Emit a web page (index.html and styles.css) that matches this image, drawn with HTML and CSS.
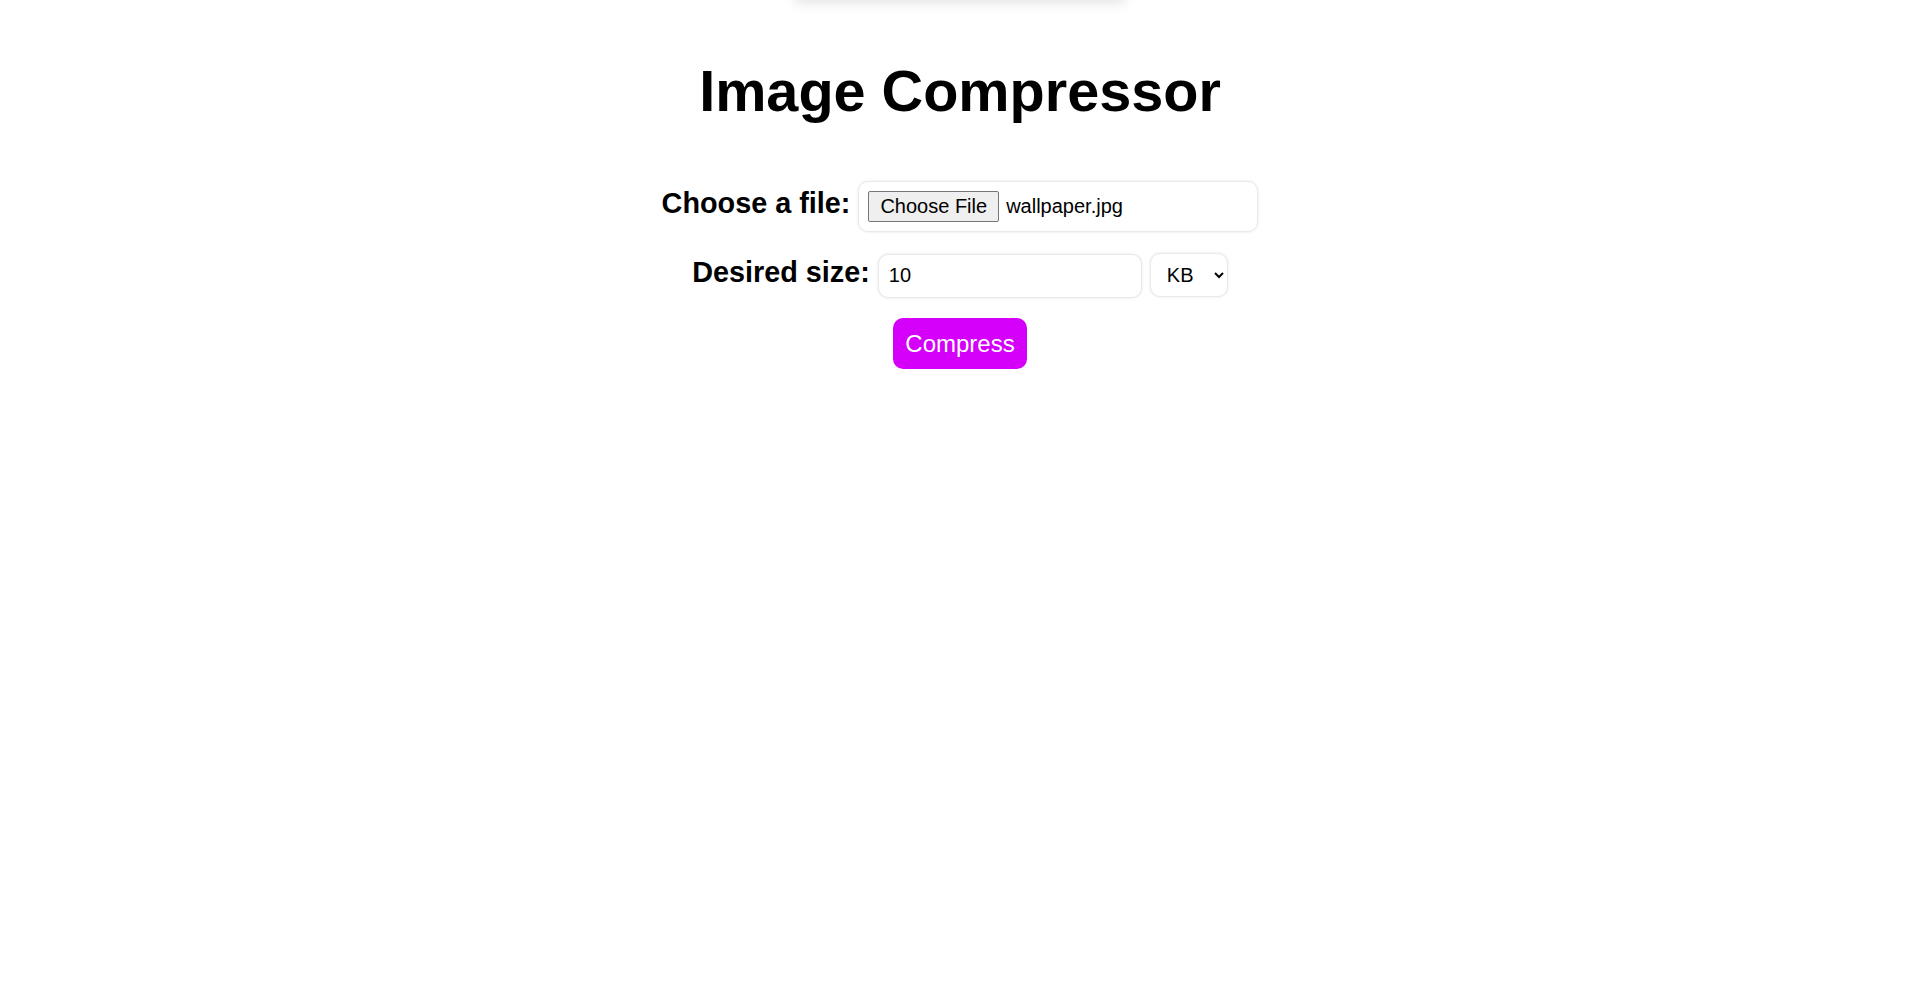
FILE: index.html
```html
<!DOCTYPE html>
<html lang="en">
<head>
<meta charset="utf-8">
<title>Image Compressor</title>
<link rel="stylesheet" href="styles.css">
</head>
<body>
<div class="topbar"></div>
<main class="page">
  <h1 class="title">Image Compressor</h1>
  <form class="form">
    <div class="row">
      <label class="label">Choose a file:</label>
      <div class="file-box">
        <button type="button" class="file-btn">Choose File</button>
        <span class="file-name">wallpaper.jpg</span>
      </div>
    </div>
    <div class="row">
      <label class="label" for="size">Desired size:</label>
      <input class="size-input" id="size" type="text" value="10">
      <select class="unit-select">
        <option>KB</option>
        <option>MB</option>
      </select>
    </div>
    <div class="actions">
      <button type="button" class="compress-btn">Compress</button>
    </div>
  </form>
</main>
</body>
</html>
```

FILE: styles.css
```css
html, body {
  margin: 0;
  padding: 0;
  background: #ffffff;
}

body {
  font-family: "Liberation Sans", Arial, sans-serif;
  color: #000;
  position: relative;
  min-height: 988px;
  overflow: hidden;
}

.topbar {
  position: absolute;
  top: -40px;
  left: 50%;
  transform: translateX(-50%);
  width: 330px;
  height: 40px;
  background: #fff;
  box-shadow: 0 2px 12px rgba(0, 0, 0, 0.13);
}

.page {
  display: flex;
  flex-direction: column;
  align-items: center;
}

.title {
  font-size: 57.6px;
  line-height: 67px;
  font-weight: bold;
  margin: 58px 0 56px;
}

.form {
  display: flex;
  flex-direction: column;
  align-items: center;
}

.row {
  display: flex;
  align-items: baseline;
  justify-content: center;
  gap: 8px;
  margin-bottom: 21px;
}

.row + .row {
  margin-bottom: 20px;
}

.label {
  font-size: 28.8px;
  font-weight: bold;
}

.file-box {
  box-sizing: border-box;
  width: 400px;
  height: 51px;
  padding: 9px;
  border: 1px solid #e9e9e9;
  border-radius: 10px;
  box-shadow: 0 0 3px rgba(0, 0, 0, 0.1);
  display: flex;
  align-items: baseline;
}

.file-btn {
  font-family: "Liberation Sans", Arial, sans-serif;
  font-size: 20px;
  line-height: 23px;
  padding: 3px 11px;
  margin: 0 7px 0 0;
  border: 1px solid #767676;
  border-radius: 2px;
  background: #efefef;
  color: #000;
}

.file-name {
  font-size: 20px;
}

.size-input {
  box-sizing: border-box;
  width: 264px;
  height: 44px;
  padding: 0 10px;
  font-family: "Liberation Sans", Arial, sans-serif;
  font-size: 20px;
  color: #000;
  border: 1px solid #e9e9e9;
  border-radius: 10px;
  box-shadow: 0 0 3px rgba(0, 0, 0, 0.1);
  outline: none;
}

.unit-select {
  box-sizing: border-box;
  width: 78px;
  height: 44px;
  padding: 0 6px 0 12px;
  font-family: "Liberation Sans", Arial, sans-serif;
  font-size: 20px;
  color: #000;
  background: #fff;
  border: 1px solid #e9e9e9;
  border-radius: 10px;
  box-shadow: 0 0 3px rgba(0, 0, 0, 0.1);
}

.actions {
  display: flex;
  justify-content: center;
}

.compress-btn {
  font-family: "Liberation Sans", Arial, sans-serif;
  font-size: 24px;
  line-height: 27px;
  padding: 12px;
  color: #fff;
  background: #d500f9;
  border: none;
  border-radius: 10px;
}
```
